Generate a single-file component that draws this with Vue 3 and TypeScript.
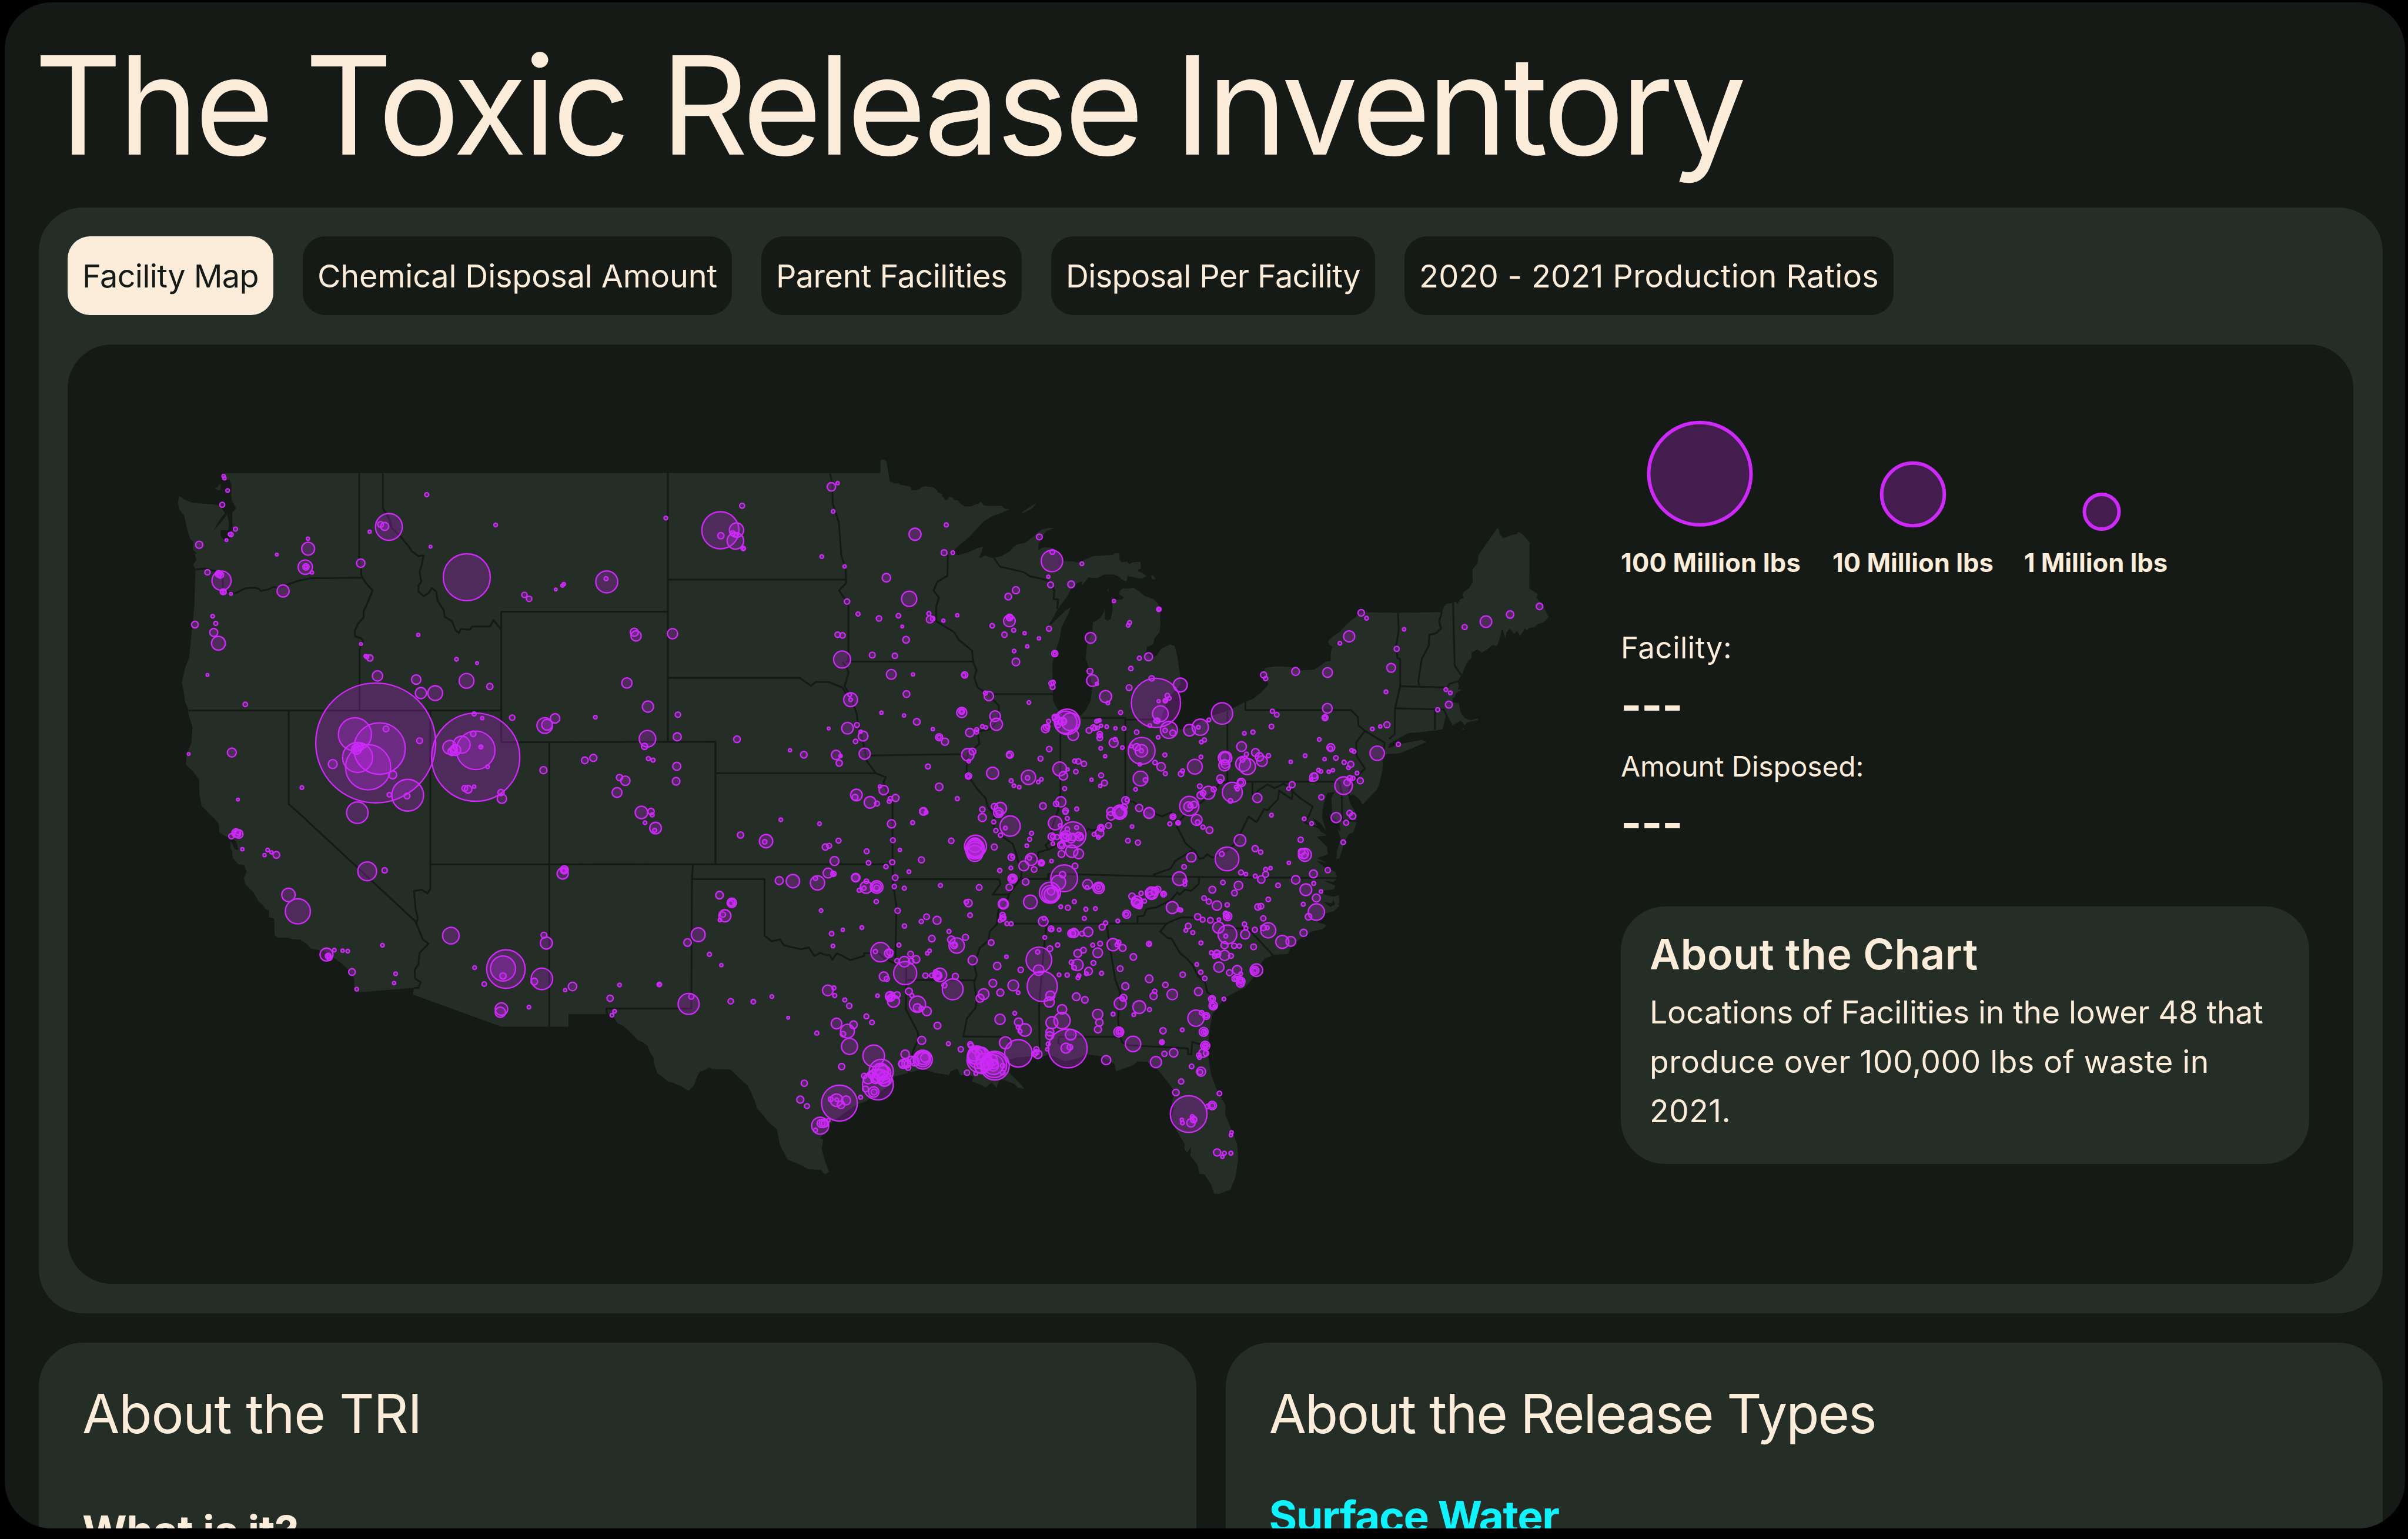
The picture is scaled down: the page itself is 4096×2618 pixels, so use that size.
<script setup lang="ts">
import { ref } from 'vue'

type Tile = { x: number; y: number; sx: number; sy: number }

/* The map is digitised sheet by sheet; each sheet has its own origin and scale. */
const tiles: Record<string, Tile> = {
  A: { x: 400, y: 1050, sx: 0.52296, sy: 0.57398 },
  B: { x: 1200, y: 1050, sx: 0.52296, sy: 0.57398 },
  C: { x: 2000, y: 1050, sx: 0.52296, sy: 0.57398 },
  D: { x: 2800, y: 1050, sx: 0.54209, sy: 0.57398 },
  E: { x: 400, y: 1900, sx: 0.52296, sy: 0.57398 },
  F: { x: 1200, y: 1900, sx: 0.52296, sy: 0.57398 },
  G: { x: 2000, y: 1900, sx: 0.33333, sy: 0.35077 },
  H: { x: 2450, y: 1900, sx: 0.33333, sy: 0.35077 },
  I: { x: 2000, y: 1900, sx: 0.76531, sy: 0.58673 },
}

/* "A 10,20 30,40 B 5,6" -> "x,y x,y x,y" in map units */
function trace(source: string): string {
  let tile = tiles.A
  const out: string[] = []
  for (const token of source.trim().split(/\s+/)) {
    if (tiles[token]) {
      tile = tiles[token]
      continue
    }
    const [x, y] = token.split(',').map(Number)
    out.push(`${(tile.x + x * tile.sx).toFixed(1)},${(tile.y + y * tile.sy).toFixed(1)}`)
  }
  return out.join(' ')
}

const mainland = trace(`
A 240,97 C 111,97 111,44 128,42 138,52 146,98 152,130 175,140 190,138 200,145 222,148 246,153 248,166 270,167 290,160 292,154 310,151 335,153 350,156 362,166 368,177 385,180 388,192 402,207 412,205 416,194 432,195 440,206 458,209 470,222 487,233 520,233 535,224 548,222 560,212 570,228 600,231 650,230 668,243 690,243
650,260 610,273 575,292 545,320 510,355 470,385 440,410 430,428 460,430 500,420 545,403 568,397 565,412 550,442 562,440 578,432 600,440 618,443 650,435 690,415 705,398 720,388 760,380 780,365 800,350 812,340 830,328 860,320 890,320 850,335 833,358 818,385 815,412 835,400 870,400 905,420 926,440 930,455 970,456 990,461 1010,455 1060,435 1150,430 1158,424 1178,422 1180,450 1188,460 1215,458 1222,468 1240,460 1272,457 1275,485 1263,490 1263,497 1285,505 1300,518 1275,528 1240,520 1215,517 1210,540 1190,530 1170,516 1150,510 1110,510 1080,525 1040,522 1025,540 1010,555 1012,538 990,545 965,565 945,600 920,630 900,655 880,690 862,715 875,712 900,690 940,655 962,643 945,680 920,725 912,770 890,830 878,880 880,930 882,1025 903,1060 930,1085 1000,1090 1030,1060 1050,1025 1058,970 1045,900 1028,850 1035,790 1058,745 1060,705 1090,690 1108,665 1115,650 1114,690 1125,698 1140,692 1148,650 1145,612 1190,612 1198,604 1178,590 1180,578 1195,565 1212,568 1240,563 1270,580 1290,597 1330,610 1352,630 1360,660 1362,720 1358,745 1335,770 1330,795 1302,805 1297,830 1320,855 1345,840 1365,812 1405,795 1425,800 1437,840 1450,920 1452,960 1425,985 1400,1010 1385,1045 1365,1095 1390,1115 1450,1140 1500,1135
D 10,1110 60,1085 130,1065 205,1028 240,1015 275,988 302,960 300,935 278,915 290,890 340,884 400,887 440,900 500,898 530,880 550,865 572,862 573,825 580,805 565,795 562,780 590,755 610,745 650,705 690,675 705,664 860,666 1052,663 1060,642 1070,630 1100,625 1112,620 1118,632 1130,612 1145,605 1140,588 1150,578 1170,565 1185,540 1183,490 1205,465 1210,430 1290,322 1297,325 1302,348 1318,362 1350,350 1375,345 1380,336 1395,342 1405,352 1430,378 1429,568 1450,580 1465,590 1460,605 1478,625 1490,640 1500,660 1512,683 1490,705 1465,712 1450,725 1425,728 1420,740 1410,728 1400,745 1390,760 1375,740 1365,752 1345,732 1330,745 1325,770 1315,735 1308,738 1305,760 1290,800 1270,797 1255,810 1225,828 1205,815 1180,828 1180,850 1165,862 1150,890 1138,918 1120,945 1125,965 1120,978 1138,980 1115,992 1108,1008 1098,1015 1100,1030 1125,1035 1130,1060 1135,1075 1150,1095 1175,1103 1208,1097 1208,1103 1160,1112 1150,1125 1135,1105 1120,1112 1098,1125 1090,1110 1072,1080 1065,1100 1055,1140 1025,1145 960,1152 910,1155 860,1180 825,1200 820,1218 870,1200 930,1190 965,1183 985,1192 930,1215 870,1238 810,1242 798,1262 795,1310 780,1370 770,1388 745,1412 710,1448 700,1430 670,1405 655,1410 652,1385 645,1395 655,1440 680,1480 685,1520 670,1560
I 1505,85 1492,120 1478,180 1468,185 1470,150 1482,105 1470,60 D 615,1560 610,1520 580,1500 575,1420 590,1395 558,1400 540,1450 535,1500 552,1550
I 1436,70 1420,40 1395,20 1420,75 1440,90 1408,95 1440,135 1442,165 1410,180 1440,200 1408,190 1430,215 1448,225 1465,235 1470,260 1460,275 1430,270 1465,290 1460,305 1425,310 1430,325 1462,335 1455,360 1430,355 1450,375 1470,360 1478,370 1460,392 1435,400 1410,435 1438,447 1428,462 1390,475 1360,500 1330,530 1320,562 1280,565 1250,580 1225,620 1215,655 1190,695 1160,715 1130,735 1108,770 1090,800 1083,850 1078,900 1075,960 1085,1040 1105,1110 1130,1165 1128,1200 1150,1270 1165,1320 1168,1380 1160,1450 1145,1500 1110,1518 1095,1517 1085,1480 1065,1440 1050,1438 1043,1400 1022,1365 1025,1328 1012,1355 1003,1335 1005,1320 980,1265 965,1210 972,1180 966,1150 975,1110 945,1060 925,1025 890,992 860,990 848,1005 825,1015 795,1030 790,1000 750,970 705,962 680,978 640,990 618,978 605,970 585,965 560,975 545,965 530,970 490,975 460,985 465,1030 480,1050 500,1075 515,1100 495,1095 485,1080 465,1070 440,1060 430,1095 415,1075 395,1095 385,1085 355,1070 360,1050 340,1045 320,1045 310,1020 290,1030 285,1045 240,1035 205,1020 150,1040 118,1050 110,1080 70,1115 30,1150
F 1530,1190 1460,1235 1410,1270 1395,1300 1370,1325 1385,1330 1378,1370 1393,1420 1410,1462 1393,1472 1375,1455 1315,1450 1280,1432 1225,1412 1190,1350 1178,1290 1135,1255 1120,1235 1090,1205 1075,1165 1055,1125 1045,1108 1020,1090 970,1045 890,1043 876,1035 860,1045 832,1055 818,1080 808,1108 783,1132 745,1112 715,1100 690,1093 643,1060 628,1020 625,995 610,975 600,950 580,935 555,925 525,895 490,868 465,857 440,820 246,820 246,871
E 1475,871 1080,740 1085,712 836,731 818,715 818,680 800,645 760,612 725,590 690,565 665,560 625,553 600,530 575,515 545,515 520,508 478,508 462,498 460,430 436,425 437,397 420,390 410,375 390,360 365,320 330,290 325,265 337,240 325,212 300,210 275,183 272,155 265,145 265,112 285,148 300,150 290,115 258,100 235,92 215,78 212,45 190,20 165,0
A 135,1450 125,1395 125,1345 95,1310 65,1285 70,1240 90,1195 95,1130 78,1085 75,1055 62,1030 55,980 47,950 62,890 80,850 90,760 103,640 107,520 108,490 98,470 112,450 105,425 115,425 95,408 100,380 85,365 72,330 58,270 35,245 30,215 35,190 60,205 95,218 150,222 195,225 220,232 240,260 215,290 188,333 225,295 250,265 258,300 255,330 222,330 220,355 235,368 262,365 275,330 272,260 290,240 272,210 268,185 270,150 262,125 240,120 228,108
`)

const islands = [
  'A 195,158 205,155 215,142 222,145 220,168 205,165',
  'C 740,258 770,240 808,218 790,240 755,258',
  'C 1320,515 1330,515 1342,529 1325,530',
  'C 1125,568 1130,568 1129,580 1125,578',
  'D 1135,1140 1145,1135 1148,1142',
  'I 1470,165 1475,140 1490,110 1480,150 1470,185',
  'I 1455,335 1475,328 1478,360 1465,365',
].map(trace)

const borders = [
  'A 840,97 840,480 848,480 850,515 870,545 900,575 880,620 860,660 860,685 835,710 820,740 822,762 850,770 857,780 848,800 842,815 842,1064',
  'A 108,490 150,485 215,500 230,530 232,575 285,587 330,567 370,563 392,568 400,577 435,570 460,560 475,565 530,548 570,535 630,525 850,523',
  'A 946,97 946,240 975,285 985,320 1030,360 1065,400 1075,415 1105,435 1128,432 1120,470 1110,500 1118,540 1105,555 1105,580 1130,598 1150,585 1165,565 1185,580 1190,615 1218,655 1222,682 1255,700 1270,735 1285,748 1295,732 1335,735 1345,722 1425,722 1440,695 1475,735',
  'A 1475,1193 1475,662 B 690,662',
  'A 78,1064 1475,1064',
  'A 1475,1193 B 903,1191 903,1319 F 903,208',
  'A 525,1064 525,1445 E 570,0 1095,445',
  'A 1158,1064 E 1158,310 1145,328 1120,313 1085,318 1092,390 1102,430 1095,450 1125,515 1150,533 1110,570 1105,615 1088,640 1090,675 1115,690 1105,712 1085,714',
  'E 1160,210 G 258,342',
  'B 690,97 690,1190',
  'B 690,531 1488,531',
  'B 690,931 1280,931 1330,963 1350,948 1410,948 1470,970 1490,1000',
  'B 1415,97 1425,140 1427,220 1455,300 1465,430 1485,490 1487,545 1455,575 1490,620 1497,640 1497,865',
  'B 1470,865 1490,890 1498,910 1480,965 1510,1010 1535,1080 C 8,1110 35,1200 50,1270 90,1320 135,1335 125,1355 140,1400 165,1430 G 258,0 258,342 262,470 285,620 278,1000 355,1020 352,1310 385,1370 435,1460 440,1510 410,1568 I 175,950 165,1000 160,1035',
  'B 1485,865 C 522,865',
  'C 55,1247 470,1242 500,1265',
  'B 903,1319 C 90,1319',
  'B 160,1193 F 160,870',
  'F 802,210 798,270 795,797 415,797 418,820 440,825',
  'F 798,269 1122,269 1122,500 1155,523 1190,515 1210,540 1250,548 1285,555 1320,548 1345,583 1370,570 1400,580 1412,578 1425,598 1445,572 1470,582 1505,600 1568,582 G 60,935 100,935 150,925 200,970 280,1005',
  'G 262,442 1005,442 1015,475 960,545 1075,543',
  'G 355,1113 840,1115',
  'C 412,430 410,515 365,540 348,575 372,605 360,640 360,700 440,745 460,775 520,820 525,865 540,900 530,930 545,970 595,1000 640,1045 640,1100 600,1140 545,1150 553,1200 500,1240 495,1320 540,1380 580,1420 590,1455 620,1490 G 965,70 975,110 1040,165 1100,205 1125,270 1140,330 1165,370 1160,430 1075,543 1060,590 1000,650 990,740 940,790 930,850 870,900 850,960 830,1010 848,1080 830,1130 848,1250 840,1300 780,1370 755,1490 1080,1493 1070,1530',
  'G 1340,740 1320,900 1285,1300 1290,1568 I 565,970',
  'C 618,443 645,478 750,500 780,518 820,525 860,535 888,575 885,610 905,612 900,650',
  'C 600,997 882,997',
  'C 915,1090 915,1400 905,1470 885,1520 G 1350,200 1330,215 1350,245 1280,262 1275,300 1140,330',
  'C 1010,1094 1205,1094 1205,1430',
  'C 1205,1102 1330,1100',
  'G 1350,245 H 50,220 200,180 265,130 280,105 300,115 370,110 420,60 C 1150,1490 1205,1430 1240,1435 1280,1460 1340,1485 1370,1495 1410,1478 1440,1520 1470,1490 1500,1480 D 0,1450 60,1400 95,1360 127,1354',
  'C 1440,1520 H 905,95 940,160 965,205 1010,240 1025,250 1060,305 1090,300 1115,275 1150,298 1200,280 1260,245 1300,215 1350,130 1405,25 1460,62 1500,0 D 285,1465 300,1470 345,1425 350,1390 405,1425 410,1370',
  'D 235,1354 235,1420 260,1390 300,1365 330,1380 370,1362 440,1420 495,1455 480,1490 460,1520 520,1540 550,1555',
  'H 1010,250 890,320 860,370 820,385 735,412',
  'G 1160,440 1350,440 1350,405 H 260,411 830,425 I 1470,260',
  'H 1060,425 1055,475 1000,520 960,512 920,545 905,530 860,580 760,630 690,640 670,685 628,690 625,738',
  'G 1075,738 H 830,738 880,715 940,695 1040,700 1170,715 1250,770 1390,770 1410,780 I 1205,470 1275,568',
  'H 830,738 785,790 835,832 865,838 925,935 965,965 1010,1010 1050,1085 1100,1130 1115,1195 1160,1225',
  'H 410,738 430,880 470,1110 505,1200 490,1370 500,1480 520,1530 560,1548 I 1015,938 1015,962 1025,962 1028,912 1045,920 1065,920',
  'I 635,935 618,915 622,892 805,892',
  'D 127,1068 127,1354 610,1354 620,1400 622,1510 685,1515',
  'D 205,1028 205,1062 660,1062 690,1090 692,1125 720,1147 682,1195 685,1250 720,1300 680,1340 650,1385',
  'D 720,1147 805,1195 800,1240',
  'D 862,666 866,735 855,800 860,850 872,855 872,965 850,1055 848,1160 825,1180',
  'D 872,965 1075,970 1085,955 1120,945',
  'D 850,1055 1060,1060 1075,1090',
  'D 1022,1060 1022,1142',
  'D 1052,663 1040,700 1048,730 1025,750 998,755 995,800 965,855 950,945 955,963',
  'D 1100,625 1107,880 1135,920',
].map(trace)

/* centre x, centre y, radius per facility */
const facilities: Record<string, string> = {
  A: `234,109,7 238,118,7 252,168,8 228,226,11 287,325,9 262,346,7 267,347,10 247,370,6 125,389,16 162,501,12 212,508,15 213,511,9 208,505,8 220,512,14 225,535,43 232,580,13 228,581,8 237,582,9 267,589,6 472,429,6 611,364,7 612,405,29 599,480,32 602,479,14 602,479,7 629,502,7 500,577,27 185,680,8 199,709,9 106,714,15 190,746,18 211,790,31 162,919,6 331,1039,10 78,1241,6 271,1235,20 298,1427,6 584,1378,8 847,464,19 887,336,7 973,316,60 936,306,13 954,314,18 1142,185,9 1159,397,6 1450,308,8 1321,521,105 1104,756,7 848,793,6 869,842,7 874,845,9 888,850,14 1275,855,8 1367,871,6 922,923,23 1095,938,21 1116,993,25 1180,993,33 1320,943,33 1424,966,14 1524,1093,12 914,1196,268 821,1161,74 931,1219,115 833,1255,67 880,1295,101 828,1222,22 826,1222,13 840,1213,18 960,1139,13 1110,1187,13 722,1282,20 990,1326,18 975,1407,10 1057,1409,71 1054,1412,13 832,1480,48 1361,1254,197 1361,1226,86 1245,1214,31 1298,1203,38 1270,1225,24 1255,1231,18 1265,1222,14 1350,1159,12 1354,1078,9 1390,1095,7 1384,1212,9 1383,1214,6 1414,1293,8 1312,1381,13 1327,1385,17 1354,1374,7 1474,1398,14 1478,1423,21`,
  B: `49,593,12 70,609,12 189,571,6 219,555,7 225,549,7 417,540,49 414,527,9 681,280,8 1421,153,19 1449,138,7 1022,230,11 1429,253,8 925,330,83 997,329,32 992,373,37 927,352,14 980,342,11 994,349,8 1027,404,10 1029,405,6 1378,437,8 1480,477,7 1491,620,12 1540,671,9 540,745,18 548,760,23 711,751,23 1449,755,12 1471,758,12 1469,856,38 507,952,23 601,1048,25 735,1081,12 732,1171,18 140,1125,35 150,1122,24 186,1096,21 366,1091,8 599,1179,37 586,1210,14 603,1260,9 624,1266,9 319,1267,15 357,1257,16 134,1307,16 474,1337,14 500,1350,21 463,1398,22 730,1291,18 727,1352,17 572,1479,28 615,1475,14 1507,1020,31 1507,1020,8 1503,1000,8 1493,1136,26 1535,1123,11 1409,1137,6 999,1181,15 1236,1226,7 1298,1244,15 1529,1190,10 1442,1245,21 1462,1249,7 1456,1278,14 1533,1408,26 1527,1417,13`,
  C: `265,346,27 405,308,9 395,421,13 434,421,8 137,523,19 239,609,34 104,689,12 191,678,10 208,722,6 327,669,9 332,693,16 344,690,10 392,698,7 454,676,7 225,776,15 74,838,13 175,841,12 159,917,22 256,917,7 487,919,14 483,920,9 227,997,15 115,1073,7 216,1084,7 273,1110,15 345,1140,7 474,1072,23 474,1068,9 474,1068,13 373,1173,16 373,1173,9 399,1191,16 33,1168,22 22,1150,7 40,1240,25 821,357,13 877,455,48 879,418,11 1011,466,8 861,519,7 871,552,13 963,550,15 716,574,16 682,600,15 687,699,26 688,685,15 690,682,10 685,690,9 610,719,10 706,737,9 665,755,12 755,749,7 819,770,7 864,731,11 767,803,7 708,822,8 716,866,17 890,832,14 890,832,7 1154,618,7 1355,652,10 1355,652,6 1224,706,9 1218,717,8 1050,768,24 1309,845,18 1268,851,9 1230,893,10 1047,904,13 1058,942,26 1078,955,7 1117,1007,27 1127,1033,8 874,953,11 882,950,10 880,968,11 1222,971,13 1342,1033,110 1323,933,12 1451,960,31 1362,1077,35 1393,1003,10 1402,1014,8 1384,1024,10 1384,1024,6 1354,1026,7 1347,1106,13 1340,1107,8 1352,1104,7 1315,1125,8 1184,1072,9 774,1031,8 595,1005,21 580,993,9 623,1087,24 629,1120,27 510,1154,19 541,1142,9 540,1152,9 566,1129,8 581,1133,8 939,1112,50 945,1110,57 960,1110,40 905,1105,17 925,1108,18 890,1090,12 900,1087,9 895,1095,16 905,1125,10 915,1110,12 862,1108,9 848,1138,18 852,1133,13 858,1128,10 972,1164,24 930,1105,10 1076,1108,8 1082,1106,8 1090,1104,7 1063,1134,13 1070,1136,10 1097,1126,7 1081,1135,8 1043,1145,13 1122,1130,8 1161,1136,7 1199,1137,9 1091,1160,12 1091,1167,9 1091,1175,13 1256,1152,10 1400,1143,38 1417,1155,13 1383,1145,10 1352,1173,8 1492,1144,26 1153,1195,20 1160,1182,9 1192,1215,8 1095,1218,8 1115,1250,7 1278,1228,60 1277,1228,28 1256,1213,16 1277,1228,9 1232,1210,7 1270,1283,7 1382,1245,9 865,1221,12 826,1260,11 689,1244,16 686,1246,11 612,1319,27 501,1244,28 522,1231,15 505,1270,8 504,1331,14 504,1332,8 323,1292,11 373,1375,17 454,1423,9 772,1336,32 768,1338,10 816,1355,8 830,1344,8 695,1350,9 707,1370,8 731,1376,8 912,1302,31 928,1330,19 947,1304,7 979,1270,9 995,1271,12 1020,1281,12 984,1313,10 934,1382,9 1054,1346,7 1097,1328,11 1112,1359,13 1093,1371,7 1273,1341,33 1295,1347,10 1251,1385,8 1338,1276,10 1365,1293,19 1384,1321,9 1461,1310,9 1454,1322,12 1516,1293,33 125,1388,21 108,1373,7 64,1438,26 95,1443,11 178,1420,16 155,1423,10 150,1434,9 300,1475,15 315,1479,8 566,1467,12 620,1455,14 647,1463,27 638,1480,22 640,1482,13 837,1453,15 917,1436,23 896,1444,12 938,1473,13 988,1465,9 1206,1430,17 1213,1428,9 1200,1457,14 1140,1475,18 1180,1478,32 1175,1478,27 1183,1478,24 1267,1461,16 1312,1481,24 1491,1453,43 1487,1455,21 1512,1447,15 1495,1452,10`,
  D: `104,1076,46 10,1132,35 2,1132,8 47,1102,8 15,1192,8 28,1184,9 13,1253,8 704,666,14 727,688,8 652,762,24 612,790,8 889,733,7 857,813,11 833,890,19 421,905,17 559,909,21 283,919,13 292,934,9 811,988,8 558,1055,21 548,1093,13 548,1093,7 321,1067,9 340,1081,10 317,1129,10 237,1152,9 200,1157,8 1069,979,8 1088,992,8 1082,1040,15 1034,1061,9 815,1122,13 786,1129,7 752,1139,8 864,1202,9 1242,702,25 1346,673,16 1150,724,11 1473,640,14 188,1211,21 209,1242,9 248,1235,17 265,1253,18 276,1270,23 304,1248,9 117,1257,29 117,1255,22 114,1287,24 118,1282,18 195,1281,32 213,1292,35 192,1265,10 400,1273,7 462,1248,8 523,1182,8 573,1215,17 571,1219,10 546,1262,7 595,1257,10 663,1226,8 673,1231,8 630,1275,9 659,1283,13 649,1297,8 500,1335,18 503,1329,12 488,1345,7 520,1307,8 530,1312,8 564,1313,7 582,1307,7 773,1238,31 97,1341,16 96,1353,9 187,1357,18 184,1357,12 148,1397,43 140,1432,10 165,1375,8 170,1384,8 256,1420,20 406,1366,13 391,1382,8 628,1370,38 643,1357,14 655,1340,12 668,1340,9 686,1319,8 700,1350,13 532,1417,11 596,1500,22 654,1482,12 667,1494,14 639,1521,11 458,1505,8 490,1524,8 317,1490,8 45,1399,28 12,1409,16 22,1400,12 8,1372,10 68,1385,11`,
  E: `269,95,12 290,82,19 294,84,17 302,86,19 297,80,10 318,148,7 431,151,8 417,172,7 448,161,7 470,171,15 876,238,42 954,234,12 524,334,30 566,401,56 694,577,29 702,583,13 707,590,12 703,582,8 729,559,8 766,561,7 789,563,8 944,539,8 1003,655,8 996,693,7 808,648,15 829,718,8 1250,500,37 1496,636,86 1483,634,56 1483,664,14 1356,630,8 1399,697,10 1476,799,28 1471,812,23`,
  F: `620,8,9 588,40,8 635,62,26 631,71,9 1195,28,8 1368,44,8 1015,90,14 1129,115,30 1123,118,10 1394,139,14 1411,134,11 1453,113,11 1435,196,20 220,247,25 227,232,18 224,235,10 228,234,13 1188,276,18 1249,278,30 1359,285,32 1350,267,9 1406,245,22 1430,248,12 1428,249,7 1529,264,17 1375,398,8 1422,492,10 1472,476,7 1428,542,8 921,335,17 976,366,21 976,366,15 970,369,12 945,419,27 936,414,12 923,436,8 136,498,13 147,530,27 826,496,31 778,528,17 876,576,9 929,620,7 127,676,48 93,687,15 264,707,19 231,722,7 474,701,8 652,699,10 654,700,6 432,755,14 452,808,8 440,824,8 69,791,8 783,778,47 795,748,12 971,767,12 1072,769,10 1155,748,8 1228,834,6 1405,723,24 1432,713,9 1436,744,9 1481,762,9 1501,786,12 1444,858,24 1520,863,17 1493,889,31 1473,901,12 1502,951,36 1356,897,9 1467,1033,14 1300,1101,14 1282,1168,16 1312,1194,11 1457,1182,80 1444,1170,28 1487,1171,20 1464,1189,17 1418,1166,11 1445,1168,8 1371,1274,38 1375,1265,18 1385,1265,18 1392,1265,16 1407,1252,8 1350,1292,9`,
  G: `251,73,29 399,65,14 475,-10,27 888,31,28 968,60,14 983,118,15 1083,88,71 1050,101,13 1015,149,15 670,186,19 972,227,21 840,222,77 838,232,62 838,250,58 835,270,56 836,245,66 836,215,50 261,182,17 310,247,11 77,256,17 90,333,16 256,329,18 461,313,21 212,359,15 373,392,13 1091,295,23 1100,291,12 1231,310,42 1218,301,15 1179,353,35 1302,333,22 1302,333,12 1302,333,17 1251,377,20 1200,219,12 1220,176,14 1233,136,14 1088,367,13 1010,384,15 1100,438,32 1100,438,22 1100,438,15 1192,460,23 1077,496,23 277,432,20 271,491,15 0,432,30 73,496,42 147,494,44 147,494,32 147,500,20 58,502,15 24,516,14 75,456,16 341,502,14 594,484,14 866,497,20 144,591,15 294,652,19 791,601,26 775,594,15 802,682,16 497,692,20 460,724,15 570,716,28 1035,607,36 1035,607,30 1225,594,48 1030,680,18 1032,700,22 1031,702,14 1012,718,12 1060,738,14 1090,739,14 43,764,13 342,754,15 654,790,14 534,838,23 670,845,26 770,829,21 708,884,54 690,882,24 694,880,14 950,864,20 303,881,14 518,919,12 502,936,12 820,982,32 174,928,68 232,936,30 240,930,22 138,924,15 385,941,20 290,986,16 341,992,37 424,976,26 388,988,20 347,1068,81 1315,723,34 1322,703,14 1326,830,13 1285,980,90 1276,927,15 1283,1048,37 1308,1156,106 1057,959,12 992,1020,26 1157,1046,19 197,1090,32 218,1106,18 489,1084,18 533,1083,16 590,1080,48 575,1085,30 572,1078,24 578,1090,18 560,1060,15 680,1176,73 699,1089,21 622,1149,18 153,1219,12 242,1223,34 236,1218,26 250,1230,24 265,1255,42 290,1213,22 235,1235,20 373,1190,24 394,1217,14 433,1275,57 432,1298,28 460,1303,15 499,1322,31 897,1208,38 872,1235,28 962,1135,27 1014,1198,25 1105,1150,38 1139,1198,13 75,1356,17 114,1397,16 573,1418,24 463,1516,28 650,1538,14 1012,1376,36 1115,1335,13 1142,1394,29 1140,1428,15 1152,1455,14 1187,1447,44 1050,1532,42`,
  H: `49,68,48 84,84,13 134,37,14 120,-5,16 174,146,91 134,108,16 199,98,14 25,158,26 30,157,14 62,161,17 33,205,12 93,214,27 93,214,16 125,155,38 120,160,28 118,155,14 160,170,32 172,160,26 218,158,30 224,158,18 210,145,18 165,255,43 213,273,35 93,274,24 23,321,12 188,354,20 112,436,94 100,411,22 72,463,50 12,532,74 15,540,60 20,545,48 20,523,26 276,477,34 272,497,14 354,500,40 354,498,29 352,496,13 88,625,13 138,632,18 183,591,14 264,642,14 331,638,13 253,703,14 588,556,23 622,592,40 620,585,34 630,608,30 615,598,28 640,622,18 651,536,15 675,588,14 725,535,44 722,537,34 750,520,26 768,510,22 712,540,15 745,530,20 809,541,20 809,541,10 550,676,28 547,675,15 488,720,13 920,438,48 960,455,14 958,478,12 870,631,42 918,645,14 930,648,14 1004,296,33 953,360,16 559,185,16 629,198,18 588,91,12 707,0,38 875,25,20 875,25,10 853,73,14 911,67,16 911,67,8 1041,47,38 1048,62,16 1085,95,15 1131,115,24 440,20,30 423,84,20 370,100,24 370,100,14 360,135,30 322,143,14 352,162,14 1345,183,41 1451,238,22 1490,262,15 1254,307,83 1217,274,17 1352,397,17 1386,408,12 1452,421,14 1225,464,16 1334,484,30 1306,534,20 1151,512,24 1494,444,26 1093,568,16 1126,591,18 1183,618,33 1255,613,15 1470,627,22 1492,622,20 1258,690,30 1245,672,18 1258,690,17 1256,690,8 1048,692,22 1083,712,17 1137,716,20 1197,711,12 1194,764,40 1257,810,66 1245,821,14 1376,741,15 1387,768,13 1381,810,32 1449,779,18 1440,893,20 1236,882,25 1304,886,18 1340,887,15 1237,950,36 1282,953,17 1185,940,25 1182,930,18 1168,955,16 1144,932,14 1190,950,12 1071,867,14 982,754,20 965,783,13 1014,798,14 1197,1028,36 1042,1010,13 1070,1062,15 1098,1103,16 1325,1047,32 1271,1065,21 1350,1072,12 1460,1048,44 1450,1050,28 1450,1050,16 1308,1105,20 1315,1105,14 1330,1100,12 1352,1122,28 1352,1122,16 1348,1135,28 1345,1110,20 20,773,20 24,778,12 77,779,13 165,803,28 172,803,20 180,800,32 185,802,28 237,805,17 280,793,33 378,761,21 402,734,15 12,905,20 66,881,15 207,936,27 247,915,20 312,881,14 364,871,17 347,932,34 163,996,16 205,1013,40 182,1032,16 317,1000,17 283,1055,27 268,1072,13 76,1079,13 133,1081,15 374,1069,14 209,1098,14 216,1084,13 455,878,43 482,878,14 494,863,16 522,900,24 707,873,18 712,873,10 597,960,23 505,1038,20 541,1155,25 708,1106,27 822,1146,19 943,1078,19 870,1210,37 739,1221,25 747,1189,15 1053,1191,28 505,1270,42 528,1232,24 518,1238,15 638,1294,45 600,1345,12 710,1311,14 455,1341,14 197,1225,27 257,1246,23 15,1218,32 7,1260,36 97,1309,33 97,1384,57 26,1398,42 12,1460,28 10,1485,28 0,1540,14 137,1570,136 158,1478,38 124,1568,35 152,1562,20 347,1343,36 359,1397,26 349,1443,25 495,1460,35 499,1458,24 500,1458,12 595,1540,54 805,1452,22 797,1528,17 797,1528,8 940,1446,13 1036,1368,57 1076,1332,16 1108,1353,24 1108,1353,12 1148,1240,24 1148,1238,12 1157,1285,30 1155,1285,18 1168,1293,12 1232,1240,13 1090,1459,31 1092,1460,19 1097,1460,10 1101,1552,32 1101,1552,20 1101,1552,10`,
  I: `1359,107,8 1323,199,5 1267,220,5 1252,225,6 1252,245,9 1372,167,20 1368,163,15 1362,155,10 1371,170,9 1398,243,12 1442,228,8 1489,117,7 1344,267,13 1399,281,6 1375,306,18 1421,313,5 1407,339,12 1290,289,7 1260,345,7 1367,364,6 1407,395,25 1383,414,10 1245,420,8 1260,468,23 1245,458,9 1257,458,6 1368,478,11 1303,514,20 1329,512,15 55,968,33 78,1030,37 76,1030,25 78,1028,20 85,1035,22 68,1082,47 88,1060,22 88,1068,16 38,1060,15 30,1100,9 55,1112,16 56,1112,9 60,1060,14 70,1050,20 15,1133,6 26,1048,8 48,1045,10 151,962,13 145,1000,14 155,998,14 158,1000,10 170,985,12 180,990,14 205,983,29 205,980,24 206,978,19 212,975,14 160,1015,8 140,1000,9 321,942,8 350,922,8 352,928,8 365,945,10 370,965,28 375,975,33 378,985,38 365,970,24 360,965,18 385,960,20 392,990,25 400,1000,20 385,1010,22 415,985,18 422,1000,14 425,1007,44 423,1005,38 421,1003,30 420,1008,16 340,1035,8 367,1038,6 449,1007,7 449,1035,7 497,958,42 552,942,8 552,953,8 556,962,13 546,960,8 585,942,5 765,985,14 917,993,17 971,956,13 943,960,8 1061,957,13 1070,958,8 1048,965,7 1050,974,6 1026,1010,7 1055,1031,14 1052,1033,8 994,1070,8 978,1114,10 1111,1118,7 1017,1200,56 1089,1166,13 1089,1166,8 1075,1170,7 996,1223,5 998,1235,6 1024,1235,13 1028,1210,6 1032,1222,10 1035,1222,7 1148,1273,5 1146,1284,5 1104,1353,11 1126,1356,6 1120,1370,5 1146,1356,6`,
}

const bubbles = Object.entries(facilities).flatMap(([key, list]) => {
  const t = tiles[key]
  return list.split(/\s+/).map((item) => {
    const [x, y, r] = item.split(',').map(Number)
    return { x: t.x + x * t.sx, y: t.y + y * t.sy, r: r * t.sx }
  })
})

const tabs = [
  { label: 'Facility Map', tracking: -0.62 },
  { label: 'Chemical Disposal Amount', tracking: -0.2 },
  { label: 'Parent Facilities', tracking: -0.54 },
  { label: 'Disposal Per Facility', tracking: -0.63 },
  { label: '2020 - 2021 Production Ratios', tracking: 0.24 },
]
const active = ref(0)

const legend = [
  { x: 134.5, y: 219.8, r: 87 },
  { x: 497, y: 255, r: 53.3 },
  { x: 818, y: 284.6, r: 29.5 },
]
</script>

<template>
  <div class="window">
    <h1 class="title">The Toxic Release Inventory</h1>
    <section class="panel">
      <nav class="tabs">
        <button
          v-for="(tab, i) in tabs"
          :key="tab.label"
          class="tab"
          :class="{ active: i === active }"
          :style="{ letterSpacing: tab.tracking + 'px' }"
          @click="active = i"
        >{{ tab.label }}</button>
      </nav>
      <div class="chart">
        <svg class="map" viewBox="158 805 3600 2196">
          <polygon class="land" :points="mainland" />
          <polygon v-for="(island, i) in islands" :key="i" class="land" :points="island" />
          <polyline v-for="(border, i) in borders" :key="i" class="border" :points="border" />
          <circle v-for="(b, i) in bubbles" :key="i" class="bubble" :cx="b.x" :cy="b.y" :r="b.r" />
        </svg>
        <aside class="side">
          <svg class="scale" viewBox="0 0 1171 341">
            <circle v-for="c in legend" :key="c.x" class="bubble key" :cx="c.x" :cy="c.y" :r="c.r" />
          </svg>
          <div class="labels">
            <span class="first">100 Million lbs</span>
            <span>10 Million lbs</span>
            <span class="last">1 Million lbs</span>
          </div>
          <p class="facility">Facility:</p>
          <p class="value">---</p>
          <p class="amount">Amount Disposed:</p>
          <p class="value second">---</p>
          <div class="about">
            <h2>About the Chart</h2>
            <p>
              Locations of Facilities in the lower 48 that<br />
              <span class="wide">produce over 100,000 lbs of waste in<br />2021.</span>
            </p>
          </div>
        </aside>
      </div>
    </section>
    <div class="row">
      <section class="card">
        <h2 class="tri">About the TRI</h2>
        <h3 class="what">What is it?</h3>
      </section>
      <section class="card">
        <h2 class="types">About the Release Types</h2>
        <h3 class="water">Surface Water</h3>
      </section>
    </div>
  </div>
</template>

<style>
body {
  margin: 0;
  background: #000;
}
</style>

<style scoped>
.window {
  box-sizing: border-box;
  width: 4083px;
  height: 2596px;
  margin: 4px 0 0 8px;
  padding: 50px 38px 0 58px;
  border-radius: 80px;
  overflow: hidden;
  background: #151a16;
  color: #fcecda;
  font-family: Inter, "Liberation Sans", sans-serif;
}
h1, h2, h3, p {
  margin: 0;
  font-weight: 400;
  white-space: nowrap;
}
.title {
  height: 299px;
  margin-left: -8px;
  font-size: 232px;
  font-weight: 440;
  line-height: 250px;
  letter-spacing: -6.8px;
}
.panel {
  box-sizing: border-box;
  height: 1881px;
  padding: 49px 50px 50px 49px;
  border-radius: 75px;
  background: #252d27;
}
.tabs {
  display: flex;
  gap: 50px;
  height: 134px;
  margin-bottom: 50px;
}
.tab {
  padding: 0 25px;
  border: 0;
  border-radius: 38px;
  background: #151a16;
  color: #fcecda;
  font: 400 54px Inter, sans-serif;
  white-space: nowrap;
}
.tab.active {
  background: #fcecda;
  color: #151a16;
}
.chart {
  display: flex;
  height: 1598px;
  border-radius: 75px;
  background: #151a16;
}
.map {
  flex: none;
  width: 2620px;
  height: 1598px;
}
.land {
  fill: #252d27;
}
.border {
  fill: none;
  stroke: #151a16;
  stroke-width: 4.2;
  stroke-linejoin: round;
}
.bubble {
  fill: rgba(204, 41, 247, 0.25);
  stroke: #cd29f7;
  stroke-width: 3.3;
}
.bubble.key {
  stroke-width: 6;
}
.side {
  width: 1171px;
  margin-left: 22px;
}
.scale {
  display: block;
  width: 1171px;
  height: 341px;
}
.labels {
  display: flex;
  gap: 54px;
  font-size: 43.5px;
  font-weight: 700;
  line-height: 60px;
  white-space: nowrap;
}
.labels .first {
  letter-spacing: 0.2px;
}
.labels .last {
  margin-left: -2px;
}
.facility {
  margin-top: 80px;
  font-size: 51px;
  line-height: 70px;
  letter-spacing: 0.5px;
}
.value {
  margin-top: 12px;
  font-size: 76px;
  font-weight: 700;
  line-height: 100px;
  letter-spacing: -0.6px;
}
.amount {
  margin-top: 22px;
  font-size: 48px;
  line-height: 66px;
  letter-spacing: -0.2px;
}
.value.second {
  margin-top: 12px;
}
.about {
  box-sizing: border-box;
  height: 438px;
  margin-top: 93px;
  padding: 36px 49px 0;
  border-radius: 75px;
  background: #252d27;
}
.about h2 {
  font-size: 71.6px;
  font-weight: 600;
  line-height: 90px;
  letter-spacing: 0.6px;
}
.about p {
  margin-top: 12px;
  font-size: 53.4px;
  line-height: 83.8px;
  letter-spacing: -0.1px;
}
.wide {
  letter-spacing: 0.5px;
}
.row {
  display: flex;
  gap: 50px;
  margin-top: 50px;
}
.card {
  box-sizing: border-box;
  flex: 1;
  height: 600px;
  padding: 61px 74px;
  border-radius: 75px;
  background: #252d27;
}
.card h2 {
  font-size: 92px;
  line-height: 120px;
}
.card h3 {
  font-size: 73px;
  font-weight: 700;
  line-height: 90px;
}
.card .tri {
  letter-spacing: -1.2px;
}
.card .types {
  letter-spacing: -2.15px;
}
.card .what {
  margin-top: 95px;
  letter-spacing: -0.5px;
}
.card .water {
  margin-top: 70px;
  color: #11f2ff;
  letter-spacing: -1.4px;
}
</style>
